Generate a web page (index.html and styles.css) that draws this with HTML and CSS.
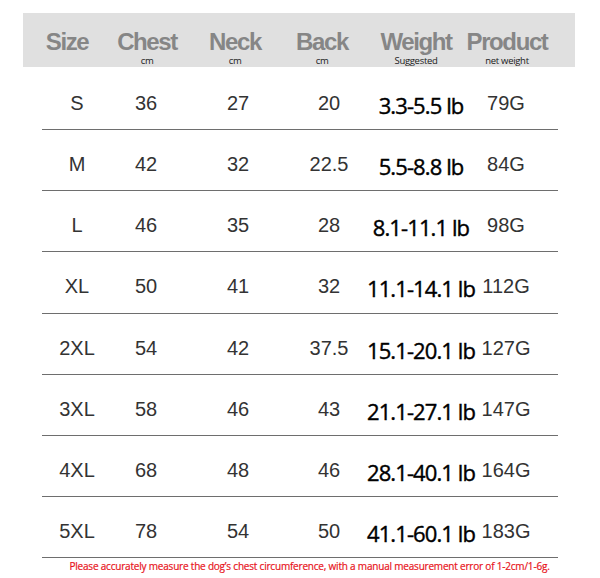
FILE: index.html
```html
<!DOCTYPE html>
<html lang="en">
<head>
<meta charset="utf-8">
<title>Size chart</title>
<link rel="stylesheet" href="styles.css">
</head>
<body>
<div class="chart">
  <div class="head">
    <div class="hcell"><span class="title">Size</span></div>
    <div class="hcell"><span class="title">Chest</span><span class="sub">cm</span></div>
    <div class="hcell"><span class="title">Neck</span><span class="sub">cm</span></div>
    <div class="hcell"><span class="title">Back</span><span class="sub">cm</span></div>
    <div class="hcell"><span class="title">Weight</span><span class="sub">Suggested</span></div>
    <div class="hcell"><span class="title">Product</span><span class="sub">net weight</span></div>
  </div>
  <div class="rows">
    <div class="row"><div class="cell">S</div><div class="cell">36</div><div class="cell">27</div><div class="cell">20</div><div class="cell weight">3.3-5.5 lb</div><div class="cell">79G</div></div>
    <div class="row"><div class="cell">M</div><div class="cell">42</div><div class="cell">32</div><div class="cell">22.5</div><div class="cell weight">5.5-8.8 lb</div><div class="cell">84G</div></div>
    <div class="row"><div class="cell">L</div><div class="cell">46</div><div class="cell">35</div><div class="cell">28</div><div class="cell weight">8.1-11.1 lb</div><div class="cell">98G</div></div>
    <div class="row"><div class="cell">XL</div><div class="cell">50</div><div class="cell">41</div><div class="cell">32</div><div class="cell weight">11.1-14.1 lb</div><div class="cell">112G</div></div>
    <div class="row"><div class="cell">2XL</div><div class="cell">54</div><div class="cell">42</div><div class="cell">37.5</div><div class="cell weight">15.1-20.1 lb</div><div class="cell">127G</div></div>
    <div class="row"><div class="cell">3XL</div><div class="cell">58</div><div class="cell">46</div><div class="cell">43</div><div class="cell weight">21.1-27.1 lb</div><div class="cell">147G</div></div>
    <div class="row"><div class="cell">4XL</div><div class="cell">68</div><div class="cell">48</div><div class="cell">46</div><div class="cell weight">28.1-40.1 lb</div><div class="cell">164G</div></div>
    <div class="row"><div class="cell">5XL</div><div class="cell">78</div><div class="cell">54</div><div class="cell">50</div><div class="cell weight">41.1-60.1 lb</div><div class="cell">183G</div></div>
  </div>
  <p class="note">Please accurately measure the dog’s chest circumference, with a manual measurement error of 1-2cm/1-6g.</p>
</div>
</body>
</html>
```
FILE: styles.css
```css
html, body {
  margin: 0;
  padding: 0;
  background: #ffffff;
}

.chart {
  width: 600px;
  padding-top: 13px;
  font-family: "Liberation Sans", Arial, sans-serif;
}

.head {
  box-sizing: border-box;
  margin-left: 23px;
  width: 552px;
  height: 54px;
  background: #e0e0e0;
  display: grid;
  grid-template-columns: 88px 72px 104px 70px 118px 64px;
  padding-top: 17px;
}

.hcell {
  display: flex;
  flex-direction: column;
  align-items: center;
}

.title {
  font-weight: bold;
  font-size: 24px;
  line-height: 24px;
  letter-spacing: -1.4px;
  color: #868686;
  white-space: nowrap;
}

.sub {
  margin-top: 2px;
  font-family: "Open Sans", sans-serif;
  font-size: 9.5px;
  line-height: 10px;
  letter-spacing: -0.3px;
  color: #1a1a1a;
  white-space: nowrap;
}

.rows {
  padding-top: 2px;
}

.row {
  box-sizing: border-box;
  margin-left: 42px;
  width: 516px;
  height: 61.14px;
  border-bottom: 1px solid #6e6e6e;
  display: grid;
  grid-template-columns: 70px 68px 116px 66px 118px 52px;
  align-items: start;
}

.cell {
  padding-top: 24px;
  font-size: 20px;
  line-height: 20px;
  color: #333333;
  text-align: center;
  white-space: nowrap;
}

.cell.weight {
  padding-top: 26px;
  font-family: "Open Sans", sans-serif;
  font-size: 22px;
  letter-spacing: -0.9px;
  color: #000000;
  -webkit-text-stroke: 0.4px #000000;
}

.note {
  margin: 1px 0 0 0;
  padding-left: 19px;
  font-family: "Open Sans", sans-serif;
  font-size: 10px;
  line-height: 14px;
  letter-spacing: -0.2px;
  color: #e8141c;
  -webkit-text-stroke: 0.2px #e8141c;
  text-align: center;
  white-space: nowrap;
}
```
